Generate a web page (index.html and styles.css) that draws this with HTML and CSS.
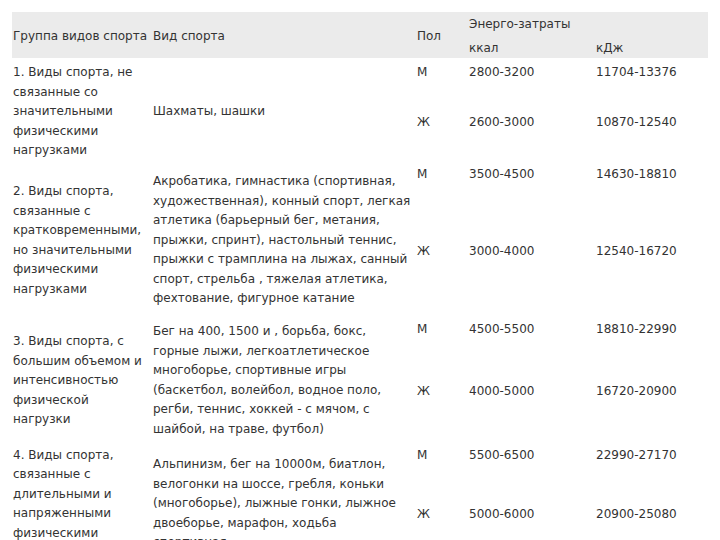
FILE: index.html
```html
<!DOCTYPE html>
<html lang="ru">
<head>
<meta charset="utf-8">
<title>Энерго-затраты</title>
<link rel="stylesheet" href="styles.css">
</head>
<body>
<table class="sport">
  <colgroup>
    <col class="c-group"><col class="c-kind"><col class="c-sex"><col class="c-kcal"><col class="c-kj">
  </colgroup>
  <thead>
    <tr class="h1">
      <th rowspan="2" class="hs">Группа видов спорта</th>
      <th rowspan="2" class="hs">Вид спорта</th>
      <th rowspan="2" class="hs">Пол</th>
      <th colspan="2">Энерго-затраты</th>
    </tr>
    <tr class="h2">
      <th>ккал</th>
      <th>кДж</th>
    </tr>
  </thead>
  <tbody>
    <tr class="m first">
      <td rowspan="2" class="span first-span">1. Виды спорта, не<br>связанные со<br>значительными<br>физическими<br>нагрузками</td>
      <td rowspan="2" class="span first-span">Шахматы, шашки</td>
      <td>М</td><td>2800-3200</td><td>11704-13376</td>
    </tr>
    <tr class="f g1"><td>Ж</td><td>2600-3000</td><td>10870-12540</td></tr>

    <tr class="m">
      <td rowspan="2" class="span">2. Виды спорта,<br>связанные с<br>кратковременными,<br>но значительными<br>физическими<br>нагрузками</td>
      <td rowspan="2" class="span">Акробатика, гимнастика (спортивная,<br>художественная), конный спорт, легкая<br>атлетика (барьерный бег, метания,<br>прыжки, спринт), настольный теннис,<br>прыжки с трамплина на лыжах, санный<br>спорт, стрельба , тяжелая атлетика,<br>фехтование, фигурное катание</td>
      <td>М</td><td>3500-4500</td><td>14630-18810</td>
    </tr>
    <tr class="f g2"><td>Ж</td><td>3000-4000</td><td>12540-16720</td></tr>

    <tr class="m">
      <td rowspan="2" class="span">3. Виды спорта, с<br>большим объемом и<br>интенсивностью<br>физической<br>нагрузки</td>
      <td rowspan="2" class="span">Бег на 400, 1500 и , борьба, бокс,<br>горные лыжи, легкоатлетическое<br>многоборье, спортивные игры<br>(баскетбол, волейбол, водное поло,<br>регби, теннис, хоккей - с мячом, с<br>шайбой, на траве, футбол)</td>
      <td>М</td><td>4500-5500</td><td>18810-22990</td>
    </tr>
    <tr class="f g3"><td>Ж</td><td>4000-5000</td><td>16720-20900</td></tr>

    <tr class="m">
      <td rowspan="2" class="span">4. Виды спорта,<br>связанные с<br>длительными и<br>напряженными<br>физическими<br>нагрузками</td>
      <td rowspan="2" class="span">Альпинизм, бег на 10000м, биатлон,<br>велогонки на шоссе, гребля, коньки<br>(многоборье), лыжные гонки, лыжное<br>двоеборье, марафон, ходьба<br>спортивная</td>
      <td>М</td><td>5500-6500</td><td>22990-27170</td>
    </tr>
    <tr class="f g4"><td>Ж</td><td>5000-6000</td><td>20900-25080</td></tr>
  </tbody>
</table>
</body>
</html>
```

FILE: styles.css
```css
html, body {
  margin: 0;
  padding: 0;
  background: #ffffff;
}
body {
  font-family: "DejaVu Sans", Verdana, sans-serif;
  font-size: 12px;
  line-height: 19.5px;
  color: #333333;
}
.sport {
  margin: 12px 0 0 12px;
  border-collapse: collapse;
  border-spacing: 0;
  table-layout: fixed;
  width: 696px;
}
.c-group { width: 140px; }
.c-kind { width: 264px; }
.c-sex { width: 52px; }
.c-kcal { width: 127px; }
.c-kj { width: 113px; }

.sport th,
.sport td {
  padding: 0 1px;
  text-align: left;
  font-weight: normal;
  white-space: nowrap;
  overflow: visible;
}
.sport thead th {
  background: #ebebeb;
}
.h1 { height: 25px; }
.h1 th { vertical-align: middle; }
.h1 th.hs { vertical-align: middle; padding-top: 4px; }
.h2 { height: 21px; }
.h2 th { vertical-align: bottom; }

.sport td { vertical-align: middle; }
.sport td.span { vertical-align: middle; }
.m { height: 21.5px; }
.m td { vertical-align: top; padding-top: 2px; }
.m td.span { vertical-align: middle; padding-top: 0; }
.m.first { height: 24.5px; }
.m.first td { padding-top: 5px; }
.m.first td.first-span { padding-top: 3px; }
.g1 { height: 80.5px; }
.g2 { height: 133.5px; }
.g3 { height: 104px; }
.g4 { height: 99.5px; }
```
